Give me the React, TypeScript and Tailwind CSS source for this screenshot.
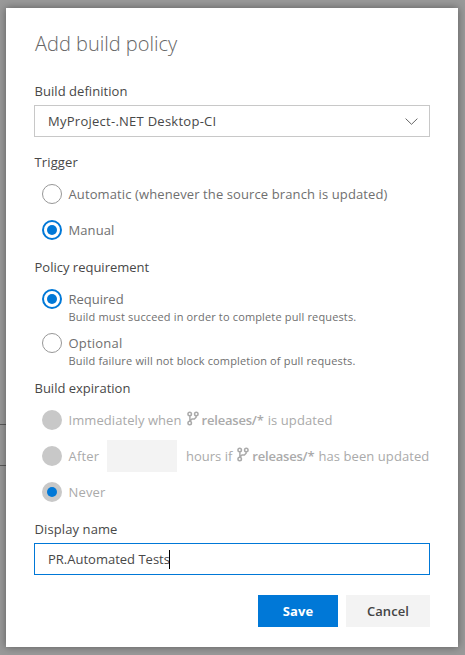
import type { ReactNode } from 'react';

type RadioState = 'off' | 'on' | 'disabled' | 'disabledOn';

const ringStyles: Record<RadioState, string> = {
  off: 'border border-[#979797] bg-white',
  on: 'border-2 border-[#0078d7] bg-white',
  disabled: 'bg-[#c8c8c8]',
  disabledOn: 'bg-[#c8c8c8]',
};

function Radio({ state }: { state: RadioState }) {
  const checked = state === 'on' || state === 'disabledOn';
  return (
    <span className={`flex size-5 shrink-0 items-center justify-center rounded-full ${ringStyles[state]}`}>
      {checked && <span className="size-2.5 rounded-full bg-[#0078d7]" />}
    </span>
  );
}

function Option({ state, className = '', children }: { state: RadioState; className?: string; children: ReactNode }) {
  return (
    <div className={`ml-2 flex h-5 items-center whitespace-nowrap ${className}`}>
      <Radio state={state} />
      <div className="ml-[6.5px] flex items-center pt-0.5">{children}</div>
    </div>
  );
}

function Label({ className, children }: { className: string; children: ReactNode }) {
  return <div className={`h-[18px] pl-[0.5px] leading-[18px] text-[#484848] ${className}`}>{children}</div>;
}

function Hint({ className, children }: { className: string; children: ReactNode }) {
  return <div className={`ml-[34.5px] h-4 text-[11px] leading-4 whitespace-nowrap text-[#6f6f6f] ${className}`}>{children}</div>;
}

function Branch() {
  return (
    <>
      <svg className="-mt-1.5 mr-[3px] h-[15px] w-3 shrink-0" viewBox="0 0 12 15" fill="none" stroke="#aaaaaa" strokeWidth="1.5">
        <circle cx="2.7" cy="3" r="1.75" />
        <circle cx="9.3" cy="3" r="1.75" />
        <circle cx="2.7" cy="12" r="1.75" />
        <path d="M2.9 4.7v5.6M9.1 4.7v1.6L7.4 8H5L3 10" />
      </svg>
      <span className="font-semibold tracking-[-0.2px]">releases/*</span>
    </>
  );
}

export default function App() {
  return (
    <div className="flex h-[655px] w-[465px] overflow-hidden bg-[#999999] font-['Open_Sans','Noto_Sans',sans-serif] text-[13px] text-[#6f6f6f]">
      <div className="mt-[424px] h-[42px] w-1.5 shrink-0 border-y border-[#5a5a5a]" />
      <div className="relative mt-2 h-[639px] w-[452px] bg-white px-7 pt-[22px] shadow-[0_0_8px_rgba(0,0,0,0.4)]">
        <h1 className="h-7 pl-px text-[20px] leading-7 font-light text-[#666666]">Add build policy</h1>

        <Label className="mt-6 tracking-[0.05px]">Build definition</Label>
        <div className="mt-[5px] flex h-8 items-center justify-between border border-[#c8c8c8] pr-[11px] pl-[13px] text-[#484848]">
          <span className="pt-0.5 tracking-[0.26px]">MyProject-.NET Desktop-CI</span>
          <svg className="h-[7px] w-[13px]" viewBox="0 0 13 7" fill="none" stroke="#666666">
            <path d="M.6.6l5.9 5.7L12.4.6" />
          </svg>
        </div>

        <Label className="mt-4 tracking-[0.14px]">Trigger</Label>
        <Option state="off" className="mt-[13px]">
          <span className="tracking-[0.11px]">Automatic (whenever the source branch is updated)</span>
        </Option>
        <Option state="on" className="mt-4">
          <span className="tracking-[0.1px]">Manual</span>
        </Option>

        <Label className="mt-[18px]">Policy requirement</Label>
        <Option state="on" className="mt-[13px]">Required</Option>
        <Hint className="tracking-[0.15px]">Build must succeed in order to complete pull requests.</Hint>
        <Option state="off" className="mt-2">
          <span className="tracking-[0.2px]">Optional</span>
        </Option>
        <Hint className="tracking-[0.16px]">Build failure will not block completion of pull requests.</Hint>

        <Label className="mt-2.5">Build expiration</Label>
        <div className="text-[#aaaaaa]">
          <Option state="disabled" className="mt-[13px]">
            <span className="mr-[5px] tracking-[0.07px]">Immediately when</span>
            <Branch />
            <span className="ml-1 tracking-[0.1px]">is updated</span>
          </Option>
          <Option state="disabled" className="mt-4">
            <span className="w-[38.5px] tracking-[0.2px]">After</span>
            <span className="-mt-0.5 mr-[9px] h-8 w-[70px] bg-[#f3f3f3]" />
            <span className="mr-[5px]">hours if</span>
            <Branch />
            <span className="ml-1 tracking-[0.08px]">has been updated</span>
          </Option>
          <Option state="disabledOn" className="mt-4">
            <span className="tracking-[0.16px]">Never</span>
          </Option>
        </div>

        <Label className="mt-[18px] tracking-[0.1px]">Display name</Label>
        <div className="mt-[5px] flex h-8 items-center border border-[#0078d7] pl-[13px] text-[#484848]">
          <span className="pt-0.5">PR.Automated Tests</span>
          <span className="-ml-px h-[19px] w-px bg-black" />
        </div>

        <div className="mt-5 flex justify-end gap-2">
          <button className="h-8 w-20 bg-[#0078d7] pt-0.5 font-bold tracking-[0.1px] text-white">Save</button>
          <button className="h-8 w-[84px] bg-[#f3f3f3] pt-0.5 font-semibold tracking-[0.1px] text-[#444444]">Cancel</button>
        </div>
      </div>
    </div>
  );
}
